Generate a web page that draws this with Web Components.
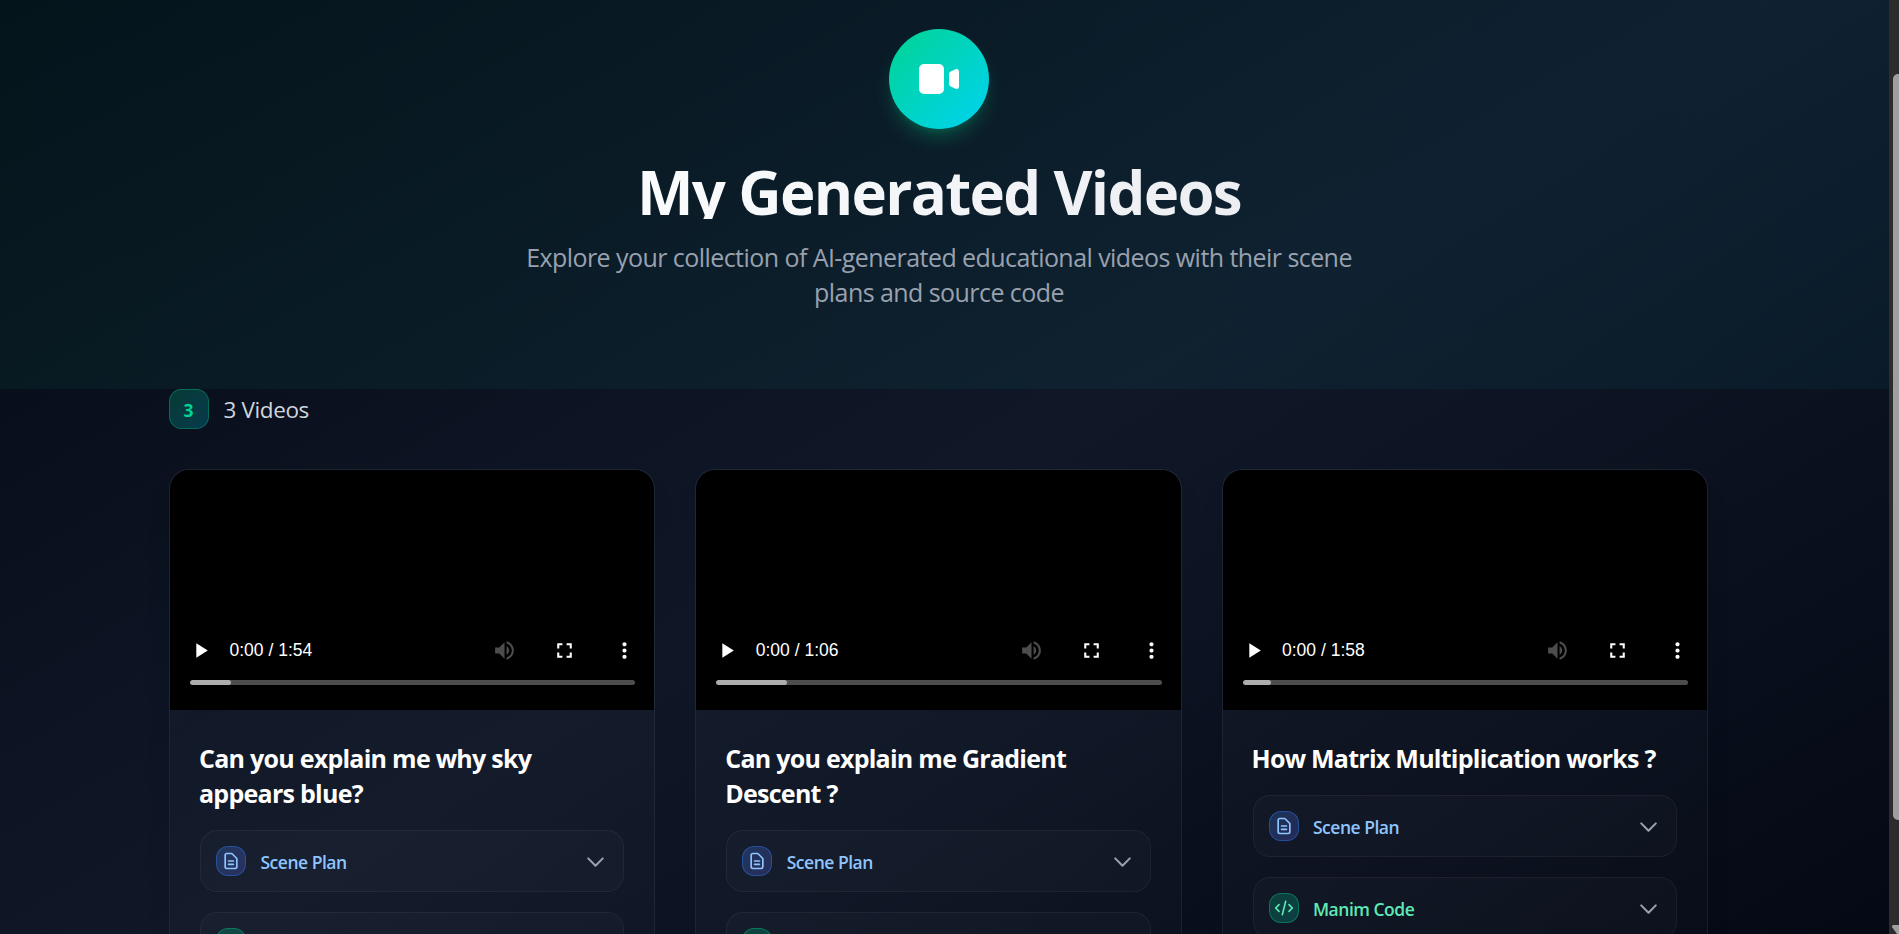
<!DOCTYPE html>
<html lang="en">
<head>
<meta charset="utf-8">
<title>My Generated Videos</title>
<style>
html,body{margin:0;height:100%;overflow:hidden;background:#030712}
body{font-family:"Open Sans","Noto Sans",sans-serif;color:#fff}
</style>
</head>
<body>
<videos-page>
  <page-hero slot="hero" heading="My Generated Videos">Explore your collection of AI-generated educational videos with their scene plans and source code</page-hero>
  <video-count value="3">3 Videos</video-count>
  <card-grid>
    <video-card duration="1:54" buffered="41" heading="Can you explain me why sky appears blue?"></video-card>
    <video-card duration="1:06" buffered="71" heading="Can you explain me Gradient Descent ?"></video-card>
    <video-card duration="1:58" buffered="28" heading="How Matrix Multiplication works ?"></video-card>
  </card-grid>
</videos-page>
<script>
class Base extends HTMLElement{
  connectedCallback(){
    if(this.shadowRoot)return;
    this.attachShadow({mode:'open'}).innerHTML='<style>*{box-sizing:border-box}'+this.css()+'</style>'+this.html();
  }
  a(n){return this.getAttribute(n)||''}
}

customElements.define('videos-page',class extends Base{
  css(){return `
    :host{display:grid;grid-template-columns:minmax(0,1fr) 10px;height:934px;overflow:hidden}
    .view{overflow:hidden;height:934px;
      background:linear-gradient(to bottom right,#030712,#101828 50%,#030712) 0 -71px/100% 1127px no-repeat}
    main{padding:0 0 0 169px;width:1707.75px;box-sizing:border-box}`}
  html(){return `<div class="view"><slot name="hero"></slot><main><slot></slot></main></div><scroll-track></scroll-track>`}
});

customElements.define('scroll-track',class extends Base{
  css(){return `
    :host{display:flex;flex-direction:column;align-items:flex-end;justify-content:space-between;background:#2c2c2c;overflow:hidden;padding-top:74px;box-sizing:border-box}
    i{display:block;width:6px;height:746px;background:#9f9f9f;border-radius:5px 0 0 5px}
    svg{display:block;width:8px;height:9px}`}
  html(){return `<i></i><svg viewBox="0 0 8 9"><path d="M2 0H8V9H6L1.2 2.2Q.6 .4 2 0Z" fill="#9f9f9f"/></svg>`}
});

customElements.define('page-hero',class extends Base{
  css(){return `
    :host{display:flex;flex-direction:column;align-items:center;height:389px;padding:29px 11px 0 0;box-sizing:border-box;text-align:center;
      background:linear-gradient(to right,rgba(0,188,125,.065),rgba(0,184,219,.053))}
    .logo{width:100px;height:100px;border-radius:50%;display:grid;place-items:center;flex:none;
      background:linear-gradient(135deg,#00d492,#00d3f2);box-shadow:0 12px 19px -4px rgba(0,188,125,.3),0 5px 8px -5px rgba(0,188,125,.3)}
    svg{width:50px;height:50px;fill:#fff}
    h1{margin:30px 0 0;padding-top:3px;height:60px;font-size:60px;line-height:60px;font-weight:700;letter-spacing:-1.7px;white-space:nowrap;
      background:linear-gradient(to right,#fafbfc,#eceef2);-webkit-background-clip:text;background-clip:text;color:transparent}
    p{margin:21px 0 0;width:840px;font-size:25px;line-height:35px;letter-spacing:-.56px;color:#99a1af}`}
  html(){return `<div class="logo"><svg viewBox="0 0 20 20"><path d="M2 6a2 2 0 012-2h6a2 2 0 012 2v8a2 2 0 01-2 2H4a2 2 0 01-2-2V6zM14.553 7.106A1 1 0 0014 8v4a1 1 0 00.553.894l2 1A1 1 0 0018 13V7a1 1 0 00-1.447-.894l-2 1z"/></svg></div><h1>${this.a('heading')}</h1><p><slot></slot></p>`}
});

customElements.define('video-count',class extends Base{
  css(){return `
    :host{display:flex;align-items:center;gap:14.5px;height:40px;font-size:22.5px;line-height:30px;letter-spacing:-.38px;color:#d1d5dc}
    b{width:40px;height:40px;border-radius:12.5px;border:1px solid rgba(0,188,125,.4);display:grid;place-items:center;padding:1px 1px 0 0;
      font-size:17.5px;line-height:20px;letter-spacing:0;color:#00d492;background:linear-gradient(135deg,rgba(0,188,125,.25),rgba(0,184,219,.25))}
    span{padding-top:1px}`}
  html(){return `<b>${this.a('value')}</b><span><slot></slot></span>`}
});

customElements.define('card-grid',class extends Base{
  css(){return `:host{display:grid;grid-template-columns:repeat(3,minmax(0,1fr));gap:40px;margin-top:40px;align-items:start}`}
  html(){return `<slot></slot>`}
});

customElements.define('video-card',class extends Base{
  css(){return `
    :host{display:block;min-height:560px;border:1px solid rgba(255,255,255,.06);border-radius:20px;overflow:hidden;box-sizing:border-box;
      background:linear-gradient(135deg,rgba(255,255,255,.022),rgba(255,255,255,.014));box-shadow:0 20px 30px -8px rgba(0,0,0,.15)}
    .body{padding:30px;display:grid;gap:20px}
    h3{margin:0 0 -1px -1px;font-size:25px;line-height:35px;font-weight:700;letter-spacing:-.74px;color:#fff;padding-top:1px}`}
  html(){return `<video-player duration="${this.a('duration')}" buffered="${this.a('buffered')}"></video-player>
    <div class="body"><h3>${this.a('heading')}</h3>
    <fold-row kind="plan">Scene Plan</fold-row><fold-row kind="code">Manim Code</fold-row></div>`}
});

customElements.define('video-player',class extends Base{
  css(){return `
    :host{display:flex;flex-direction:column;justify-content:flex-end;height:240px;background:#000;padding:0 17px 25px 18px;box-sizing:border-box}
    .row{display:flex;align-items:center;height:40px;margin-bottom:10px}
    svg{width:25px;height:25px;fill:#fff;flex:none;display:block}
    time{font:17.5px/20px "Liberation Sans",Arial,sans-serif;margin:-1px auto 0 16.5px;color:#fff;white-space:nowrap}
    .row svg+svg{margin-left:35px}
    .off{opacity:.3}
    .bar{height:5px;border-radius:3px;background:#4d4d4d;margin:0 2px 0 2px;overflow:hidden}
    .bar i{display:block;height:5px;border-radius:3px;background:#adadad;width:${this.a('buffered')}px}`}
  html(){return `<div class="row">
    <svg viewBox="0 0 24 24"><path d="M8 5v14l11-7z"/></svg>
    <time>0:00 / ${this.a('duration')}</time>
    <svg class="off" viewBox="0 0 24 24"><path d="M3 9v6h4l5 5V4L7 9H3zm13.5 3c0-1.77-1.02-3.29-2.5-4.03v8.05c1.48-.73 2.5-2.25 2.5-4.02zM14 3.23v2.06c2.89.86 5 3.54 5 6.71s-2.11 5.85-5 6.71v2.06c4.01-.91 7-4.49 7-8.77s-2.99-7.86-7-8.77z"/></svg>
    <svg viewBox="0 0 24 24"><path d="M7 14H5v5h5v-2H7v-3zm-2-4h2V7h3V5H5v5zm12 7h-3v2h5v-5h-2v3zM14 5v2h3v3h2V5h-5z"/></svg>
    <svg viewBox="0 0 24 24"><path d="M12 8c1.1 0 2-.9 2-2s-.9-2-2-2-2 .9-2 2 .9 2 2 2zm0 2c-1.1 0-2 .9-2 2s.9 2 2 2 2-.9 2-2-.9-2-2-2zm0 6c-1.1 0-2 .9-2 2s.9 2 2 2 2-.9 2-2-.9-2-2-2z"/></svg>
    </div><div class="bar"><i></i></div>`}
});

customElements.define('fold-row',class extends Base{
  css(){const p=this.a('kind')==='plan';return `
    :host{display:flex;align-items:center;height:62px;padding:0 15px;border:1px solid rgba(255,255,255,.05);border-radius:17px;box-sizing:border-box;
      background:rgba(255,255,255,.02);font-size:17.5px;line-height:25px;font-weight:600;letter-spacing:-.5px;color:${p?'#8ec5ff':'#5ee9b5'}}
    .tile{width:30px;height:30px;border-radius:12px;display:grid;place-items:center;margin-right:14.5px;
      border:1px solid ${p?'rgba(43,127,255,.4)':'rgba(0,188,125,.45)'};
      background:${p?'linear-gradient(135deg,rgba(60,135,245,.25),rgba(97,95,235,.25))':'linear-gradient(135deg,rgba(0,188,125,.25),rgba(0,187,167,.25))'}}
    svg{display:block;fill:none;stroke:currentColor;stroke-width:2;stroke-linecap:round;stroke-linejoin:round;width:20px;height:20px}
    span{padding-top:2px;flex:1}
    .chev{width:25px;height:25px;color:#99a1af}`}
  html(){return `<div class="tile"><svg viewBox="0 0 24 24"><path d="${this.a('kind')==='plan'?'M9 12h6m-6 4h6m2 5H7a2 2 0 01-2-2V5a2 2 0 012-2h5.586a1 1 0 01.707.293l5.414 5.414a1 1 0 01.293.707V19a2 2 0 01-2 2z':'M10 20l4-16m4 4l4 4-4 4M6 16l-4-4 4-4'}"/></svg></div><span><slot></slot></span><svg class="chev" viewBox="0 0 24 24"><path d="M19 9l-7 7-7-7"/></svg>`}
});
</script>
</body>
</html>
